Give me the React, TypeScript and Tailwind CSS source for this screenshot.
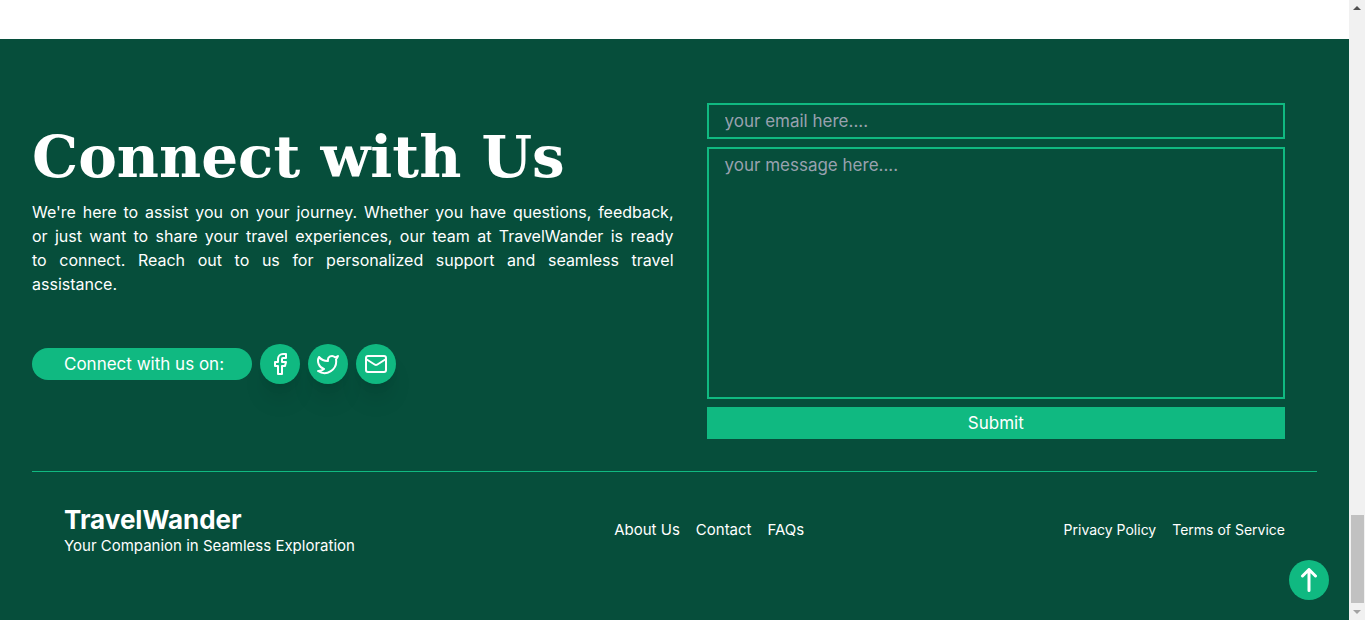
import type { ReactNode } from "react";
import { Facebook, Mail, Twitter } from "lucide-react";

function SocialLink({ label, href, children }: { label: string; href: string; children: ReactNode }) {
  return (
    <a
      href={href}
      aria-label={label}
      className="flex size-10 items-center justify-center rounded-full bg-[#10b981] text-white shadow-xl"
    >
      {children}
    </a>
  );
}

function ConnectIntro() {
  return (
    <section className="flex flex-col pt-6">
      <h2 className="font-['DejaVu_Serif',serif] text-[58px] leading-[60px] font-bold whitespace-nowrap">
        Connect with Us
      </h2>
      <p className="mt-[13px] pr-px text-justify text-base">
        We're here to assist you on your journey. Whether you have questions, feedback, or&nbsp;just want to share your
        travel experiences, our team at TravelWander is ready to&nbsp;connect. Reach out to us for personalized support
        and seamless travel assistance.
      </p>
      <div className="mt-12 flex items-center gap-2">
        <span className="rounded-full bg-[#10b981] py-1 pr-7 pl-8">Connect with us on:</span>
        <SocialLink label="Facebook" href="#facebook">
          <Facebook size={24} />
        </SocialLink>
        <SocialLink label="Twitter" href="#twitter">
          <Twitter size={24} />
        </SocialLink>
        <SocialLink label="Email" href="#email">
          <Mail size={24} />
        </SocialLink>
      </div>
    </section>
  );
}

function ContactForm() {
  return (
    <form className="flex flex-col gap-2 px-8" onSubmit={(e) => e.preventDefault()}>
      <input
        type="email"
        aria-label="Email"
        placeholder="your email here...."
        className="h-9 border-2 border-[#10b981] bg-transparent px-4 placeholder:text-gray-400"
      />
      <textarea
        aria-label="Message"
        placeholder="your message here...."
        className="h-[252px] resize-none border-2 border-[#10b981] bg-transparent px-4 py-1 placeholder:text-gray-400"
      />
      <button type="submit" className="bg-[#10b981] py-1">
        Submit
      </button>
    </form>
  );
}

function BottomBar() {
  return (
    <div className="flex items-center justify-between border-t border-[#10b981] px-8 pt-8 pb-16 text-[15px] leading-5">
      <div>
        <h3 className="text-[26px] leading-8 font-bold">TravelWander</h3>
        <p>Your Companion in Seamless Exploration</p>
      </div>
      <nav aria-label="Company" className="flex gap-4">
        <a href="#about">About Us</a>
        <a href="#contact">Contact</a>
        <a href="#faqs">FAQs</a>
      </nav>
      <nav aria-label="Legal" className="flex gap-4 text-sm">
        <a href="#privacy">Privacy Policy</a>
        <a href="#terms">Terms of Service</a>
      </nav>
    </div>
  );
}

function ScrollRail() {
  return (
    <div aria-hidden="true" className="flex w-4 shrink-0 flex-col items-center bg-[#f1f1f1] py-1.5">
      <svg width="8" height="4" viewBox="0 0 8 4" fill="#505050">
        <path d="M4 0l4 4H0z" />
      </svg>
      <div className="flex-1" />
      <div className="mb-[7px] h-[88px] w-[13px] bg-[#c1c1c1]" />
      <svg width="8" height="4" viewBox="0 0 8 4" fill="#a3a3a3">
        <path d="M0 0h8L4 4z" />
      </svg>
    </div>
  );
}

export default function App() {
  return (
    <div className="flex min-h-screen font-[Inter,sans-serif] text-[17px] leading-6 text-white">
      <div className="flex min-w-0 flex-1 flex-col bg-white pt-[39px]">
        <footer className="flex-1 bg-[#064e3b] px-8 pt-16">
          <div className="grid grid-cols-2 pb-8">
            <ConnectIntro />
            <ContactForm />
          </div>
          <BottomBar />
        </footer>
      </div>
      <ScrollRail />
      <button
        type="button"
        aria-label="Back to top"
        className="fixed right-9 bottom-5 flex size-10 items-center justify-center rounded-full bg-[#10b981]"
      >
        <svg
          width="24"
          height="24"
          viewBox="0 0 24 24"
          fill="none"
          stroke="white"
          strokeWidth="3"
          strokeLinecap="round"
          strokeLinejoin="round"
        >
          <path d="M12 22.500V1.500M5.500 8L12 1.500L18.500 8" />
        </svg>
      </button>
    </div>
  );
}
